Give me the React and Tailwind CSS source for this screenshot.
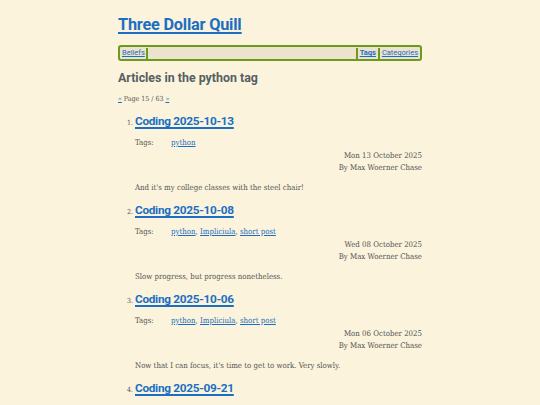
import React from 'react';

const posts = [
  { n: 1, title: 'Coding 2025-10-13', tags: ['python'], date: 'Mon 13 October 2025', summary: "And it's my college classes with the steel chair!" },
  { n: 2, title: 'Coding 2025-10-08', tags: ['python', 'Impliciula', 'short post'], date: 'Wed 08 October 2025', summary: 'Slow progress, but progress nonetheless.' },
  { n: 3, title: 'Coding 2025-10-06', tags: ['python', 'Impliciula', 'short post'], date: 'Mon 06 October 2025', summary: "Now that I can focus, it's time to get to work. Very slowly." },
  { n: 4, title: 'Coding 2025-09-21', tags: [], date: '', summary: '' },
];

const head = { fontFamily: 'Roboto, "Open Sans", sans-serif' };
const body = { fontFamily: '"DejaVu Serif Condensed", "DejaVu Serif", serif' };

const Post = ({ post }) => (
  <li className="flex">
    <span className="w-[17px] shrink-0 text-right pr-[2px] pt-[6px] text-[7px] text-[#555]" style={body}>{post.n}.</span>
    <div className="flex-1 min-w-0">
      <a href="#" className="block text-[11.8px] font-bold text-[#1a6fc4] underline decoration-[1.5px] underline-offset-[2px] leading-[18px] tracking-[-0.3px]" style={head}>{post.title}</a>
      {post.date && (
        <div className="text-[7.8px] text-[#555]" style={body}>
          <div className="flex mt-[8px] leading-[10px]">
            <span className="w-[36px]">Tags:</span>
            <span>
              {post.tags.map((t, i) => (
                <React.Fragment key={t}>
                  <a href="#" className="text-[#1a6fc4] underline">{t}</a>{i < post.tags.length - 1 ? ', ' : ''}
                </React.Fragment>
              ))}
            </span>
          </div>
          <div className="text-right mt-[2px] leading-[12px]">{post.date}</div>
          <div className="text-right leading-[12px]">By Max Woerner Chase</div>
          <p className="mt-[8px] leading-[12px]">{post.summary}</p>
          <div className="h-[7px]" />
        </div>
      )}
    </div>
  </li>
);

export default function App() {
  return (
    <div className="min-h-[405px] bg-[#fbf3dc] overflow-hidden">
      <div className="w-[304px] mx-auto pt-[14px]">
        <h1 className="text-[16.3px] font-bold text-[#1a6fc4] underline decoration-[1.5px] underline-offset-[2px] leading-[22px] tracking-[-0.2px]" style={head}>
          <a href="#">Three Dollar Quill</a>
        </h1>
        <nav className="mt-[9px] h-[16px] flex items-center border-2 border-[#6b9a1c] rounded-[3px] bg-[#ebe3ce] text-[7.5px] leading-none px-[2px]" style={head}>
          <a href="#" className="text-[#1a6fc4] underline pr-[1px]">Beliefs</a>
          <span className="w-[2px] h-[11px] bg-[#6b9a1c]" />
          <span className="flex-1" />
          <span className="w-[2px] h-[11px] bg-[#6b9a1c]" />
          <a href="#" className="text-[#1a6fc4] underline font-bold px-[2px]">Tags</a>
          <span className="w-[2px] h-[11px] bg-[#6b9a1c]" />
          <a href="#" className="text-[#1a6fc4] underline pl-[2px]">Categories</a>
        </nav>
        <h2 className="mt-[8px] text-[12.4px] font-bold text-[#555f63] leading-[18px]" style={head}>Articles in the python tag</h2>
        <div className="mt-[7px] text-[7px] text-[#555] leading-[10px]" style={body}>
          <a href="#" className="text-[#1a6fc4] underline">«</a> Page 15 / 63 <a href="#" className="text-[#1a6fc4] underline">»</a>
        </div>
        <ol className="mt-[8px]">
          {posts.map(p => <Post key={p.n} post={p} />)}
        </ol>
      </div>
    </div>
  );
}
